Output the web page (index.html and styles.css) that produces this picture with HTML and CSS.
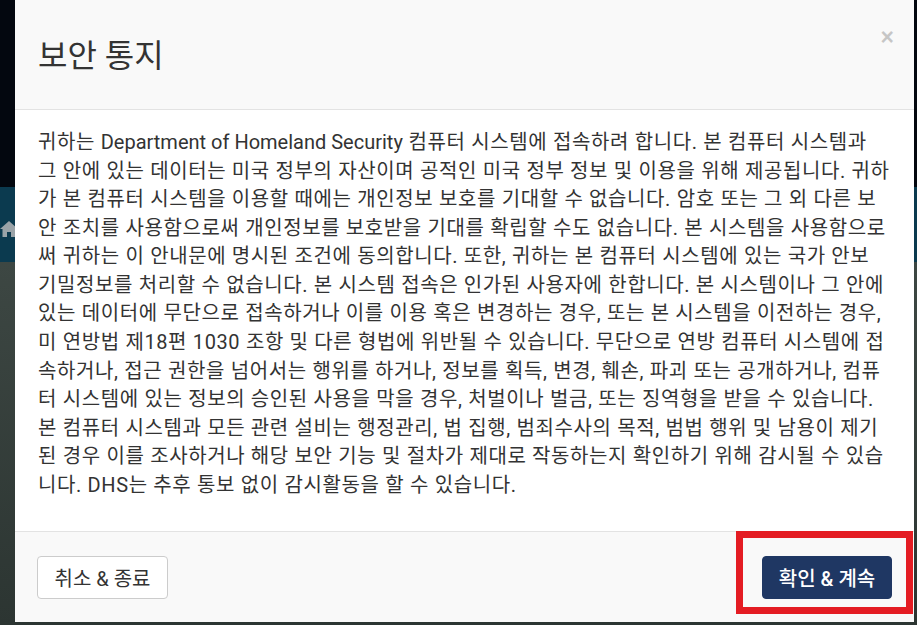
FILE: index.html
```html
<!DOCTYPE html>
<html lang="ko">
<head>
    <meta charset="UTF-8">
    <meta name="viewport" content="width=device-width, initial-scale=1.0">
    <title>보안 통지</title>
    <link rel="stylesheet" href="styles.css">
</head>
<body>
    <div class="backdrop">
        <svg class="home-icon" width="20" height="20" viewBox="0 0 20 20">
            <path d="M10 2 L1 10 L3.5 10 L3.5 18 L8 18 L8 13 L12 13 L12 18 L16.5 18 L16.5 10 L19 10 Z" fill="#9aa3a8"/>
        </svg>
    </div>

    <div class="modal">
        <div class="modal-header">
            <h1>보안 통지</h1>
            <button class="close" type="button">&times;</button>
        </div>
        <div class="modal-body">
            <p>귀하는 <span class="en" lang="en">Department of Homeland Security</span> 컴퓨터 시스템에 접속하려 합니다. 본 컴퓨터 시스템과 그 안에 있는 데이터는 미국 정부의 자산이며 공적인 미국 정부 정보 및 이용을 위해 제공됩니다. 귀하가 본 컴퓨터 시스템을 이용할 때에는 개인정보 보호를 기대할 수 없습니다. 암호 또는 그 외 다른 보안 조치를 사용함으로써 개인정보를 보호받을 기대를 확립할 수도 없습니다. 본 시스템을 사용함으로써 귀하는 이 안내문에 명시된 조건에 동의합니다. 또한, 귀하는 본 컴퓨터 시스템에 있는 국가 안보 기밀정보를 처리할 수 없습니다. 본 시스템 접속은 인가된 사용자에 한합니다. 본 시스템이나 그 안에 있는 데이터에 무단으로 접속하거나 이를 이용 혹은 변경하는 경우, 또는 본 시스템을 이전하는 경우, 미 연방법 제18편 1030 조항 및 다른 형법에 위반될 수 있습니다. 무단으로 연방 컴퓨터 시스템에 접속하거나, 접근 권한을 넘어서는 행위를 하거나, 정보를 획득, 변경, 훼손, 파괴 또는 공개하거나, 컴퓨터 시스템에 있는 정보의 승인된 사용을 막을 경우, 처벌이나 벌금, 또는 징역형을 받을 수 있습니다. 본 컴퓨터 시스템과 모든 관련 설비는 행정관리, 법 집행, 범죄수사의 목적, 범법 행위 및 남용이 제기된 경우 이를 조사하거나 해당 보안 기능 및 절차가 제대로 작동하는지 확인하기 위해 감시될 수 있습니다. DHS는 추후 통보 없이 감시활동을 할 수 있습니다.</p>
        </div>
        <div class="modal-footer">
            <button class="btn btn-default" type="button">취소 &amp; 종료</button>
            <button class="btn btn-primary" type="button">확인 &amp; 계속</button>
            <div class="highlight"></div>
        </div>
    </div>
</body>
</html>
```

FILE: styles.css
```css
html, body {
    margin: 0;
    padding: 0;
    height: 625px;
    overflow: hidden;
}

body {
    font-family: Roboto, "Noto Sans CJK KR", sans-serif;
    color: #333;
    position: relative;
    background: linear-gradient(to bottom, #03070f 0, #03070f 187px, #0b3a4f 187px, #0b3a4f 262px, #3d4743 262px, #2c3532 100%);
}

/* page behind the dialog */
.backdrop {
    position: absolute;
    top: 0;
    left: 0;
    right: 0;
    bottom: 0;
}

.home-icon {
    position: absolute;
    left: -1px;
    top: 219px;
}

.modal {
    position: relative;
    margin-left: 15px;
    width: 899px;
    height: 622px;
    background-color: #fff;
    display: flex;
    flex-direction: column;
}

.modal-header {
    position: relative;
    height: 105px;
    padding: 4px 23px 0 23px;
    background-color: #f9f9f9;
    border-bottom: 1px solid #e3e3e3;
    display: flex;
    align-items: center;
}

.modal-header h1 {
    margin: 0;
    font-size: 32px;
    font-weight: 400;
    line-height: 1.1;
    color: #333;
}

.close {
    position: absolute;
    top: 26px;
    right: 20px;
    padding: 0;
    border: 0;
    background: none;
    font-family: "Liberation Sans", Arial, sans-serif;
    font-size: 23px;
    font-weight: bold;
    line-height: 1;
    color: #000;
    opacity: 0.2;
}

.modal-body {
    flex: 1;
    padding: 18px 23px 0 23px;
}

.modal-body p {
    margin: 0;
    font-size: 20px;
    letter-spacing: 0.6px;
    word-spacing: 0.15px;
    line-height: 1.42857;
}

.modal-body .en {
    letter-spacing: 0;
    word-spacing: 0;
}

.modal-footer {
    position: relative;
    height: 90px;
    padding: 0 22px;
    background-color: #f9f9f9;
    border-top: 1px solid #e3e3e3;
    display: flex;
    align-items: center;
    justify-content: space-between;
}

.btn {
    height: 43px;
    padding: 0 12px;
    font-family: Roboto, "Noto Sans CJK KR", sans-serif;
    font-size: 20px;
    border-radius: 4px;
    cursor: pointer;
}

.btn-default {
    width: 131px;
    background-color: #fff;
    border: 1px solid #ccc;
    color: #333;
}

.btn-primary {
    width: 130px;
    background-color: #1f3763;
    border: 1px solid #1f3763;
    color: #fff;
    font-weight: 500;
}

/* red box drawn over the confirm button */
.highlight {
    position: absolute;
    top: -1px;
    right: 1px;
    width: 177px;
    height: 83px;
    box-sizing: border-box;
    border: 7px solid #e41c23;
}
```
